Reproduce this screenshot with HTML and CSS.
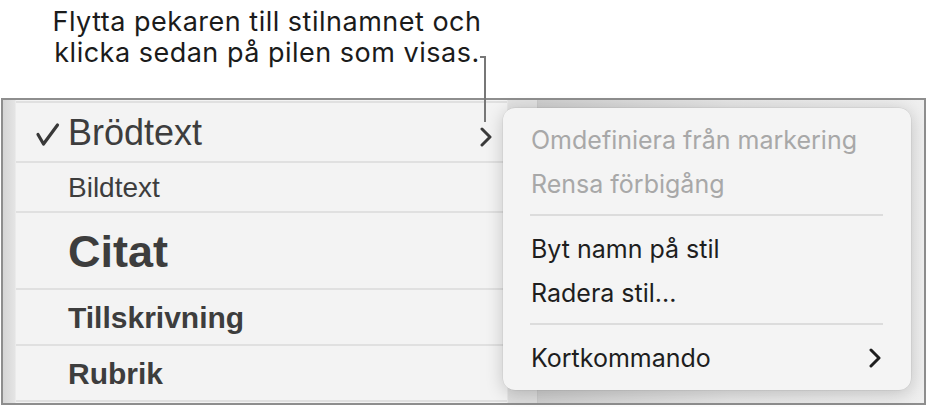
FILE: index.html
```html
<!DOCTYPE html>
<html lang="sv">
<head>
<meta charset="utf-8">
<title>Stilmeny</title>
<link rel="stylesheet" href="styles.css">
</head>
<body>
<div class="page">
  <p class="caption">Flytta pekaren till stilnamnet och<br>klicka sedan på pilen som visas.</p>
  <div class="frame">
    <div class="edge"></div>
    <div class="styles">
      <div class="row row-body">
        <svg class="check" width="26" height="26" viewBox="0 0 26 26"><polyline points="3,12.5 8.5,22 22.5,3" fill="none" stroke="#383838" stroke-width="3.2" stroke-linecap="round" stroke-linejoin="round"/></svg>
        <span class="name name-body">Brödtext</span>
        <svg class="chev" width="12" height="20" viewBox="0 0 12 20"><polyline points="2,2 10,10 2,18" fill="none" stroke="#3a3a3a" stroke-width="3" stroke-linecap="round" stroke-linejoin="round"/></svg>
      </div>
      <div class="row row-caption"><span class="name name-caption">Bildtext</span></div>
      <div class="row row-quote"><span class="name name-quote">Citat</span></div>
      <div class="row row-attr"><span class="name name-bold">Tillskrivning</span></div>
      <div class="row row-head"><span class="name name-bold">Rubrik</span></div>
      <div class="row-end"></div>
    </div>
    <div class="gutter"></div>
    <div class="backdrop"></div>
  </div>

  <div class="leader"></div>
  <div class="leader-tick"></div>

  <div class="menu">
    <div class="item disabled">Omdefiniera från markering</div>
    <div class="item disabled">Rensa förbigång</div>
    <div class="sep"></div>
    <div class="item">Byt namn på stil</div>
    <div class="item">Radera stil...</div>
    <div class="sep"></div>
    <div class="item item-sub">Kortkommando
      <svg class="chev-sub" width="14" height="20" viewBox="0 0 14 20"><polyline points="3,2 11,10 3,18" fill="none" stroke="#1e1e1e" stroke-width="3" stroke-linecap="round" stroke-linejoin="round"/></svg>
    </div>
  </div>
</div>
</body>
</html>
```

FILE: styles.css
```css
* { box-sizing: border-box; }
html, body { margin: 0; padding: 0; background: #ffffff; }
body { font-family: Inter, "Noto Sans", sans-serif; }

.page {
  position: relative;
  width: 928px;
  height: 407px;
  overflow: hidden;
}

.caption {
  margin: 0;
  width: 534px;
  height: 98px;
  padding-top: 6px;
  text-align: center;
  font-size: 27px;
  letter-spacing: 0.5px;
  line-height: 31px;
  color: #1b1b1b;
}

.frame {
  display: flex;
  margin-left: 1px;
  width: 925px;
  height: 307px;
  border: 2px solid #8e8e8e;
}

.edge {
  width: 13px;
  background: linear-gradient(to right, #d6d6d6, #e4e4e4);
  border-right: 1px solid #ebebeb;
}

.styles {
  width: 491px;
  background: #f3f3f3;
  padding-top: 1px;
  font-family: "Liberation Sans", Arial, sans-serif;
  color: #3d3d3d;
}

.row {
  display: flex;
  align-items: center;
  border-top: 2px solid #e0e0e0;
  padding-left: 52px;
  position: relative;
}
.row-body { height: 60px; padding-top: 2px; }
.row-caption { height: 50px; padding-top: 2px; }
.row-quote { height: 77px; padding-top: 2px; }
.row-attr { height: 56px; padding-top: 2px; }
.row-head { height: 56px; padding-top: 2px; }
.row-end { border-top: 2px solid #e0e0e0; }

.check {
  position: absolute;
  left: 19px;
  top: 19px;
}
.chev {
  position: absolute;
  left: 464px;
  top: 24px;
}

.name { white-space: nowrap; }
.name-body { font-size: 36px; }
.name-caption { font-size: 28px; }
.name-quote { font-size: 45px; font-weight: bold; }
.name-bold { font-size: 30px; font-weight: bold; }

.gutter {
  width: 31px;
  background: linear-gradient(to bottom, #e2e2e2, #dddddd);
  border-left: 1px solid #e8e8e8;
  border-right: 1px solid #cacaca;
}

.backdrop {
  flex: 1;
  background: linear-gradient(to right, #cfcfcf, #e6e6e6 50%, #efefef);
}

.leader {
  position: absolute;
  left: 484px;
  top: 56px;
  width: 2px;
  height: 66px;
  background: #777777;
}
.leader-tick {
  position: absolute;
  left: 480px;
  top: 56px;
  width: 5px;
  height: 2px;
  background: #777777;
}

.menu {
  position: absolute;
  left: 503px;
  top: 108px;
  width: 408px;
  height: 282px;
  background: #f4f4f4;
  border-radius: 12px;
  box-shadow: 0 3px 18px rgba(0, 0, 0, 0.2), 0 0 0 0.5px rgba(0, 0, 0, 0.08);
  padding: 10px 0 10px 0;
}

.item {
  height: 44px;
  line-height: 44px;
  padding-left: 28px;
  font-size: 25px;
  color: #1e1e1e;
  white-space: nowrap;
  position: relative;
}
.item.disabled { color: #a8a8a8; }

.sep {
  height: 2px;
  margin: 8px 28px 11px 27px;
  background: #dcdcdc;
}

.chev-sub {
  position: absolute;
  left: 365px;
  top: 12px;
}
```
